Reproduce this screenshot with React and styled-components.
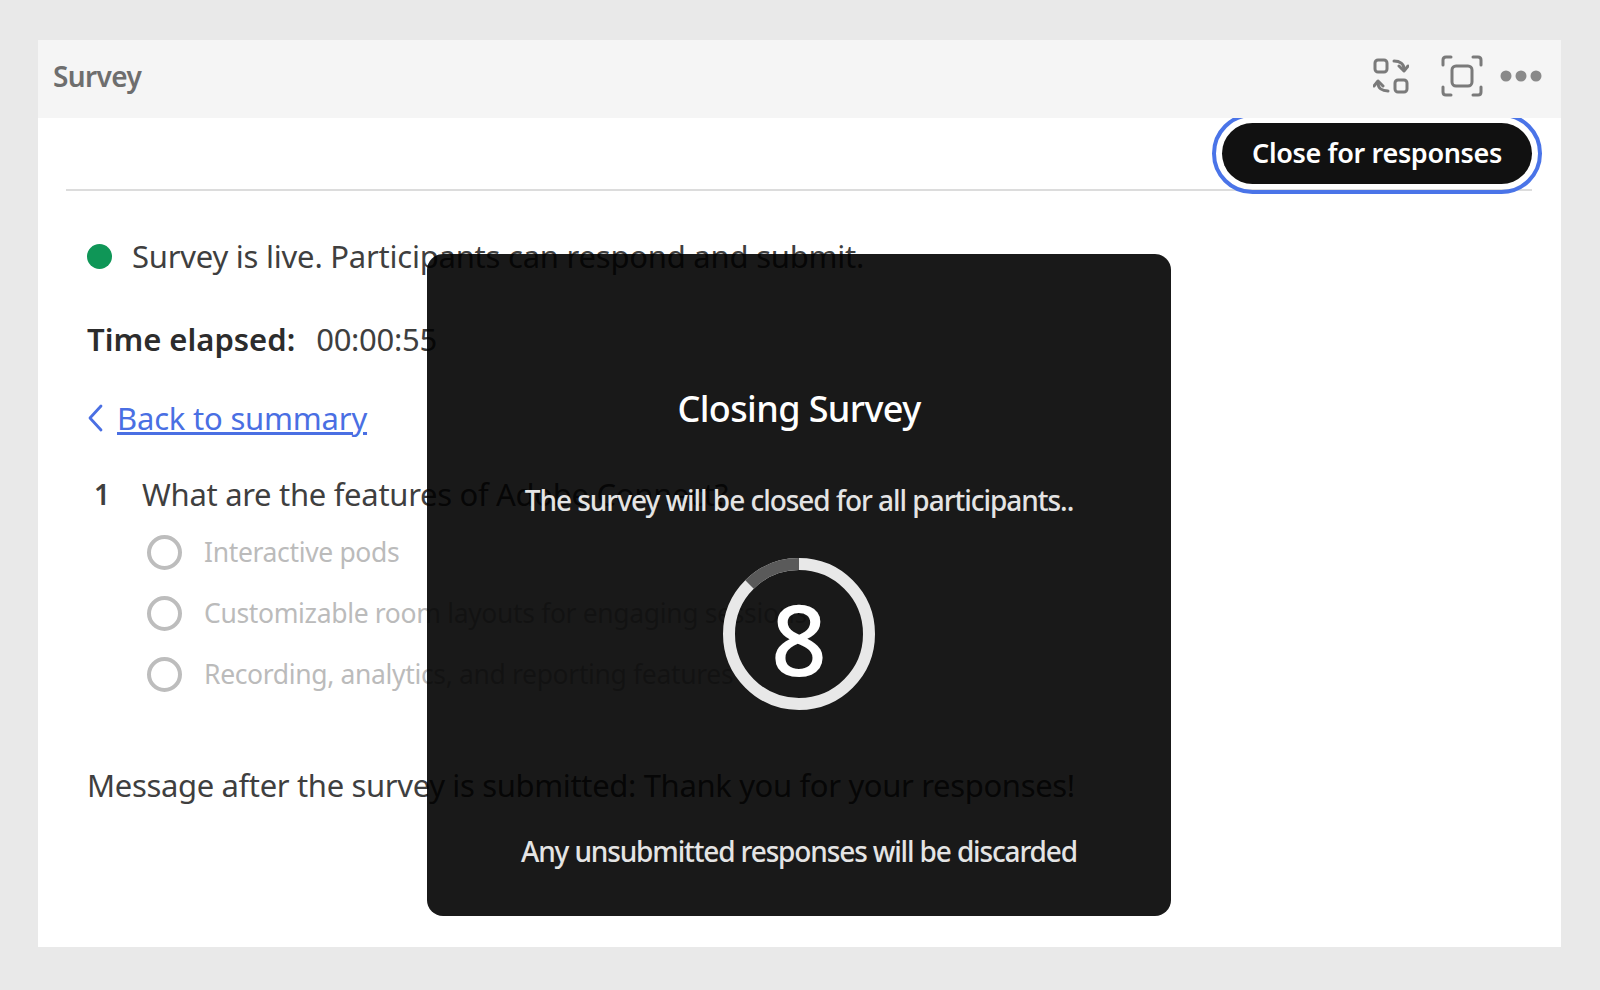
import styled, { createGlobalStyle } from "styled-components";

const GlobalStyle = createGlobalStyle`
    html, body {
        margin: 0;
        padding: 0;
        background-color: #E9E9E9;
        font-family: 'Noto Sans', 'Open Sans', sans-serif;
    }
`;

const options = [
    "Interactive pods",
    "Customizable room layouts for engaging sessions",
    "Recording, analytics, and reporting features",
];

export default function App() {
    return (
        <Page>
            <GlobalStyle />
            <Card>
                <Header>
                    <Title>Survey</Title>
                    <Tools>
                        <SwapIcon />
                        <FocusIcon />
                        <MoreIcon />
                    </Tools>
                </Header>

                <ButtonRow>
                    <CloseButton>Close for responses</CloseButton>
                </ButtonRow>

                <Content>
                    <Status>
                        <LiveDot />
                        Survey is live. Participants can respond and submit.
                    </Status>
                    <Elapsed>
                        <strong>Time elapsed:</strong>
                        <span>00:00:55</span>
                    </Elapsed>
                    <BackLine>
                        <svg width="16" height="30" viewBox="0 0 16 30" fill="none">
                            <path d="M14 3 L3 15 L14 27" stroke="#4A6FE3" strokeWidth="2.8" strokeLinecap="round" strokeLinejoin="round" />
                        </svg>
                        <a href="#summary">Back to summary</a>
                    </BackLine>
                    <Question>
                        <b>1</b>
                        What are the features of Adobe Connect?
                    </Question>
                    <OptionList>
                        {options.map((option) => (
                            <Option key={option}>
                                <Radio />
                                {option}
                            </Option>
                        ))}
                    </OptionList>
                    <Message>Message after the survey is submitted: Thank you for your responses!</Message>
                </Content>

                <Dialog>
                    <DialogTitle>Closing Survey</DialogTitle>
                    <DialogText>The survey will be closed for all participants..</DialogText>
                    <Countdown>
                        <svg width="152" height="152" viewBox="0 0 152 152" fill="none">
                            <circle cx="76" cy="76" r="70" stroke="#E8E8E8" strokeWidth="12" />
                            <path d="M76 6 A70 70 0 0 0 26.5 26.5" stroke="#5A5A5A" strokeWidth="12" />
                        </svg>
                        <span>8</span>
                    </Countdown>
                    <DialogNote>Any unsubmitted responses will be discarded</DialogNote>
                </Dialog>
            </Card>
        </Page>
    );
}

function SwapIcon() {
    return (
        <svg width="36" height="38" viewBox="0 0 36 38" fill="none" stroke="#7A7A7A" strokeWidth="3" strokeLinecap="round" strokeLinejoin="round">
            <rect x="2" y="3" width="12" height="12" rx="3" />
            <rect x="22" y="23" width="12" height="12" rx="3" />
            <path d="M21 4 C27 4 31 7 31 12" />
            <path d="M26 9 L31 14 L35 9" />
            <path d="M15 34 C9 34 5 31 5 26" />
            <path d="M1 29 L5 24 L10 29" />
        </svg>
    );
}

function FocusIcon() {
    return (
        <svg width="42" height="42" viewBox="0 0 42 42" fill="none" stroke="#7A7A7A" strokeWidth="3" strokeLinecap="round" strokeLinejoin="round">
            <path d="M2 10 V5 Q2 2 5 2 H10" />
            <path d="M32 2 H37 Q40 2 40 5 V10" />
            <path d="M40 32 V37 Q40 40 37 40 H32" />
            <path d="M10 40 H5 Q2 40 2 37 V32" />
            <rect x="11" y="11" width="20" height="20" rx="4" />
        </svg>
    );
}

function MoreIcon() {
    return (
        <svg width="42" height="12" viewBox="0 0 42 12" fill="#8A8A8A">
            <circle cx="6" cy="6" r="5.5" />
            <circle cx="21" cy="6" r="5.5" />
            <circle cx="36" cy="6" r="5.5" />
        </svg>
    );
}

const Page = styled.div`
    width: 1600px;
    height: 990px;
    box-sizing: border-box;
    padding: 40px 39px 43px 38px;
    overflow: hidden;
`;

const Card = styled.div`
    position: relative;
    height: 100%;
    background-color: #FFFFFF;
    display: flex;
    flex-direction: column;
`;

const Header = styled.div`
    height: 78px;
    flex-shrink: 0;
    box-sizing: border-box;
    background-color: #F5F5F5;
    display: flex;
    align-items: center;
    justify-content: space-between;
    padding: 0 19px 7px 15px;
`;

const Title = styled.h1`
    margin: 0;
    font-size: 28px;
    font-weight: 600;
    color: #6E6E6E;
    letter-spacing: -0.6px;
`;

const Tools = styled.div`
    display: flex;
    align-items: center;
    gap: 32px;

    svg:last-child {
        margin-left: -15px;
    }
`;

const ButtonRow = styled.div`
    height: 71px;
    margin: 0 29px 0 28px;
    border-bottom: 2px solid #DCDCDC;
    display: flex;
    justify-content: flex-end;
    align-items: flex-start;
    overflow: visible;
    flex-shrink: 0;
`;

const CloseButton = styled.button`
    width: 310px;
    height: 61px;
    margin: 5px 0 0;
    padding: 0 0 3px;
    border: none;
    border-radius: 31px;
    background-color: #111111;
    color: #FFFFFF;
    font-family: inherit;
    font-size: 27px;
    font-weight: 600;
    letter-spacing: -0.35px;
    outline: 4px solid #4A74E8;
    outline-offset: 6px;
    clip-path: inset(-5px -12px -12px -12px);
`;

const Content = styled.div`
    padding: 0 0 0 49px;
    color: #3F3F3F;
    font-size: 31px;
    letter-spacing: -0.3px;
`;

const Status = styled.div`
    height: 40px;
    margin-top: 45px;
    display: flex;
    align-items: center;
    gap: 20px;
    letter-spacing: -0.23px;
`;

const LiveDot = styled.span`
    width: 25px;
    height: 25px;
    border-radius: 50%;
    background-color: #0F9657;
`;

const Elapsed = styled.div`
    height: 40px;
    margin-top: 43px;
    display: flex;
    align-items: center;
    gap: 21px;

    strong {
        font-weight: 600;
        letter-spacing: 0;
        color: #2C2C2C;
    }
`;

const BackLine = styled.div`
    height: 40px;
    margin-top: 39px;
    display: flex;
    align-items: center;
    gap: 14px;

    a {
        color: #4A6FE3;
        letter-spacing: -0.2px;
    }
`;

const Question = styled.div`
    height: 40px;
    margin-top: 36px;
    display: flex;
    align-items: center;

    b {
        width: 55px;
        padding-left: 7px;
        box-sizing: border-box;
        font-size: 28px;
        font-weight: 600;
    }
`;

const OptionList = styled.div`
    margin-top: 20px;
    padding-left: 60px;
    display: flex;
    flex-direction: column;
    gap: 25px;
`;

const Option = styled.div`
    height: 36px;
    display: flex;
    align-items: center;
    gap: 22px;
    font-size: 26.5px;
    letter-spacing: -0.35px;
    color: #BBBBBB;
`;

const Radio = styled.span`
    width: 35px;
    height: 35px;
    box-sizing: border-box;
    border: 4px solid #BDBDBD;
    border-radius: 50%;
    flex-shrink: 0;
`;

const Message = styled.div`
    margin-top: 73px;
    height: 40px;
    line-height: 40px;
    letter-spacing: -0.35px;
`;

const Dialog = styled.div`
    position: absolute;
    left: 389px;
    top: 214px;
    width: 744px;
    height: 662px;
    box-sizing: border-box;
    padding-top: 130px;
    background-color: rgba(0, 0, 0, 0.9);
    border-radius: 16px;
    display: flex;
    flex-direction: column;
    align-items: center;
    color: #E4E4E4;
`;

const DialogTitle = styled.h2`
    margin: 0;
    height: 50px;
    line-height: 50px;
    font-size: 36px;
    font-weight: 500;
    letter-spacing: -0.6px;
    color: #FFFFFF;
`;

const DialogText = styled.p`
    margin: 48px 0 0;
    height: 36px;
    line-height: 36px;
    font-size: 28px;
    font-weight: 500;
    letter-spacing: -1.03px;
`;

const Countdown = styled.div`
    position: relative;
    margin-top: 40px;
    width: 152px;
    height: 152px;

    span {
        position: absolute;
        inset: 8px 0 0;
        display: flex;
        align-items: center;
        justify-content: center;
        font-size: 98px;
        font-weight: 500;
        color: #FFFFFF;
    }
`;

const DialogNote = styled.p`
    margin: 123px 0 0;
    height: 36px;
    line-height: 36px;
    font-size: 28px;
    font-weight: 500;
    letter-spacing: -1.14px;
`;
